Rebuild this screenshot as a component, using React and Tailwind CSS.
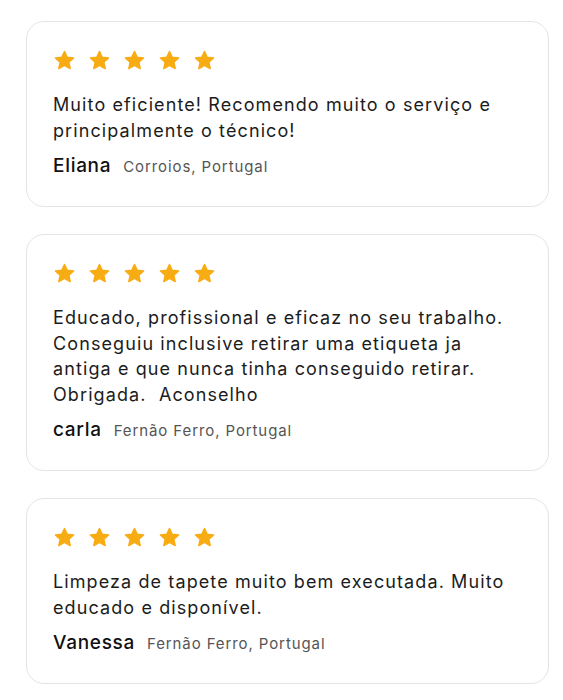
import { Fragment } from 'react';

// avaliações dos clientes
const REVIEWS = [
  {
    id: 1,
    text: 'Muito eficiente! Recomendo muito o serviço e principalmente o técnico!',
    name: 'Eliana',
    place: 'Corroios, Portugal'
  },
  {
    id: 2,
    text: 'Educado, profissional e eficaz no seu trabalho. Conseguiu inclusive retirar uma etiqueta ja antiga e que nunca tinha conseguido retirar. Obrigada.\u00a0 Aconselho',
    name: 'carla',
    place: 'Fernão Ferro, Portugal'
  },
  {
    id: 3,
    text: 'Limpeza de tapete muito bem executada. Muito educado e disponível.',
    name: 'Vanessa',
    place: 'Fernão Ferro, Portugal'
  }
];

const Star = () => (
  <svg width="23" height="23" viewBox="0 0 24 24" className="shrink-0">
    <path
      d="M12 2.6l2.85 6.05 6.6.7-4.95 4.5 1.4 6.55L12 17.05 6.1 20.4l1.4-6.55-4.95-4.5 6.6-.7z"
      fill="#f8ac14"
      stroke="#f8ac14"
      strokeWidth="1.6"
      strokeLinejoin="round"
    />
  </svg>
);

function ReviewCard({ review }) {
  return (
    <div className="rounded-[18px] border border-[#e4e4e4] bg-white pt-[27px] pb-[27px] pl-[26px] pr-[26px]">
      <div className="flex gap-[12px]">
        {[1, 2, 3, 4, 5].map(i => (
          <Star key={i} />
        ))}
      </div>
      <p className="mt-[20px] text-[18px] leading-[25.5px] tracking-[1.1px] text-[#1c1c1c]">{review.text}</p>
      <div className="mt-[11px] flex items-baseline gap-[12px] leading-[24px]">
        <span className="text-[19px] font-medium tracking-[0.7px] text-[#111]">{review.name}</span>
        <span className="text-[15px] tracking-[0.9px] text-[#555]">{review.place}</span>
      </div>
    </div>
  );
}

export default function App() {
  return (
    <div
      className="min-h-[700px] bg-white pt-[21px] pl-[26px] pr-[14px] flex flex-col gap-[27px]"
      style={{ fontFamily: 'Inter, "Open Sans", sans-serif' }}
    >
      {REVIEWS.map(r => (
        <Fragment key={r.id}>
          <ReviewCard review={r} />
        </Fragment>
      ))}
    </div>
  );
}
